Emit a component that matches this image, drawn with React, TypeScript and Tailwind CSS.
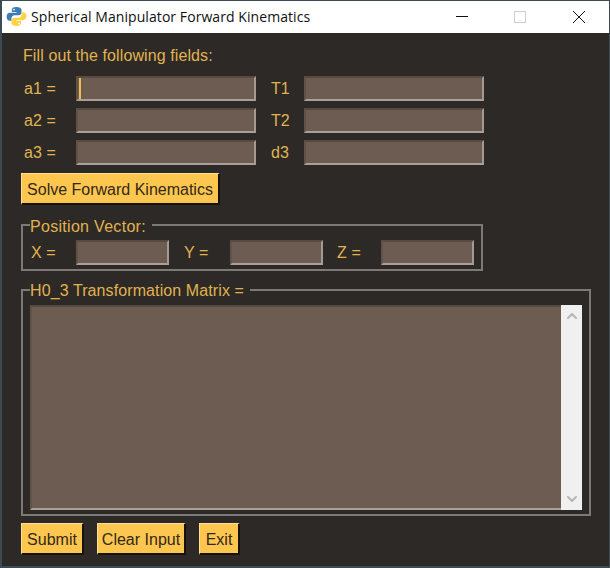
import { ChevronDown, ChevronUp } from 'lucide-react';

const fieldClass =
  'h-[25px] border-t-2 border-l-2 border-r-2 border-b-2 border-t-[#574a41] border-l-[#5f5249] border-r-[#a39a93] border-b-[#a9a098] bg-[#6c5c51]';
const labelClass = 'text-[16px] leading-[20px] tracking-[0.1px] text-[#e0b350]';
const buttonClass =
  'h-[32px] border-t border-l border-t-[#ffe09a] border-l-[#ffe09a] border-r-2 border-b-2 border-r-[#17130c] border-b-[#17130c] bg-[#fdc64f] pt-[3px] text-[16px] text-[#33281a]';

function PythonLogo() {
  return (
    <svg viewBox="0 0 20 20" className="h-[21px] w-[21px]">
      <path
        d="M9.8 1C6.6 1 5.6 2.2 5.6 3.8v1.9h4.4v.8H3.6C1.8 6.5.6 8 .6 10.2c0 2.3 1.2 3.8 2.9 3.8h1.7v-2.3c0-1.7 1.4-3 3.1-3h4c1.4 0 2.5-1.100 2.500-2.500V3.800C14.800 2 12.900 1 9.800 1z"
        fill="#3f7cb5"
      />
      <circle cx="7.600" cy="3.400" r="0.800" fill="#ffffff" />
      <path
        d="M10.200 19c3.200 0 4.200-1.200 4.200-2.800v-1.900H10v-.8h6.400c1.800 0 3-1.500 3-3.700 0-2.300-1.200-3.800-2.900-3.800h-1.700v2.300c0 1.700-1.400 3-3.100 3h-4c-1.400 0-2.500 1.100-2.500 2.500v2.400C5.200 18 7.100 19 10.200 19z"
        fill="#ffd343"
      />
      <circle cx="12.400" cy="16.600" r="0.800" fill="#ffffff" />
    </svg>
  );
}

function TitleBar() {
  return (
    <div className="flex h-[32px] shrink-0 items-center bg-white pb-[1px] pl-[4px] font-['Open_Sans',sans-serif] text-[14px] tracking-[0.07px] text-[#111111]">
      <PythonLogo />
      <span className="ml-[4px]">Spherical Manipulator Forward Kinematics</span>
      <div className="ml-auto flex items-center">
        <div className="h-px w-[12px] bg-[#111111]" />
        <div className="ml-[46px] h-[12px] w-[12px] border border-[#cfcfcf]" />
        <svg viewBox="0 0 12 12" className="mr-[24px] ml-[47px] h-[12px] w-[12px]" stroke="#111111" strokeWidth="1">
          <path d="M0 0 12 12M12 0 0 12" />
        </svg>
      </div>
    </div>
  );
}

function FieldRow({ left, right, cursor }: { left: string; right: string; cursor?: boolean }) {
  return (
    <div className="flex items-center">
      <span className={`${labelClass} w-[53px] pl-[1px]`}>{left}</span>
      <div className={`${fieldClass} w-[180px] pl-[1px]`}>
        {cursor && <div className="h-[21px] w-[2px] bg-[#f2bd4f]" />}
      </div>
      <span className={`${labelClass} ml-[15px] w-[33px]`}>{right}</span>
      <div className={`${fieldClass} w-[180px]`} />
    </div>
  );
}

export default function App() {
  return (
    <div className="flex h-[568px] w-[610px] flex-col overflow-hidden border-t border-r border-b-2 border-l-2 border-[#3d4c54] bg-[#2d2926] font-['Liberation_Sans',sans-serif]">
      <TitleBar />
      <div className="flex flex-1 flex-col pl-[19px]">
        <p className={`${labelClass} mt-[13px] ml-[2px]`}>Fill out the following fields:</p>
        <div className="mt-[10px] ml-[2px] flex flex-col gap-[7px]">
          <FieldRow left="a1 =" right="T1" cursor />
          <FieldRow left="a2 =" right="T2" />
          <FieldRow left="a3 =" right="d3" />
        </div>
        <button className={`${buttonClass} mt-[8px] w-[199px]`}>Solve Forward Kinematics</button>

        <fieldset className="mt-[7px] h-[59px] w-[462px] border-2 border-[#7d7975] pl-[7px]">
          <legend className={`${labelClass} pt-[5px] pr-[6px] tracking-[0.3px]`}>Position Vector:</legend>
          <div className="flex items-center pt-[3px]">
            <span className={`${labelClass} ml-[1px] w-[45px]`}>X =</span>
            <div className={`${fieldClass} mr-[15px] w-[93px]`} />
            <span className={`${labelClass} w-[46px]`}>Y =</span>
            <div className={`${fieldClass} mr-[14px] w-[93px]`} />
            <span className={`${labelClass} w-[44px]`}>Z =</span>
            <div className={`${fieldClass} w-[93px]`} />
          </div>
        </fieldset>

        <fieldset className="mt-[7px] h-[238px] w-[570px] border-2 border-[#7d7975] pl-[7px]">
          <legend className={`${labelClass} pt-[3px] pr-[6px]`}>H0_3 Transformation Matrix =</legend>
          <div className="mt-[4px] flex h-[205px] w-[552px]">
            <div className="w-[531px] border-t-2 border-l-2 border-b-2 border-t-[#574a41] border-l-[#5f5249] border-b-[#a9a098] bg-[#6c5c51]" />
            <div className="flex w-[21px] flex-col items-center justify-between bg-[#f0f0f0] py-[3px] text-[#b5b5b5]">
              <ChevronUp size={16} strokeWidth={3} />
              <ChevronDown size={16} strokeWidth={3} />
            </div>
          </div>
        </fieldset>

        <div className="mt-[7px] flex gap-[13px]">
          <button className={`${buttonClass} w-[63px]`}>Submit</button>
          <button className={`${buttonClass} w-[89px]`}>Clear Input</button>
          <button className={`${buttonClass} w-[41px]`}>Exit</button>
        </div>
      </div>
    </div>
  );
}
